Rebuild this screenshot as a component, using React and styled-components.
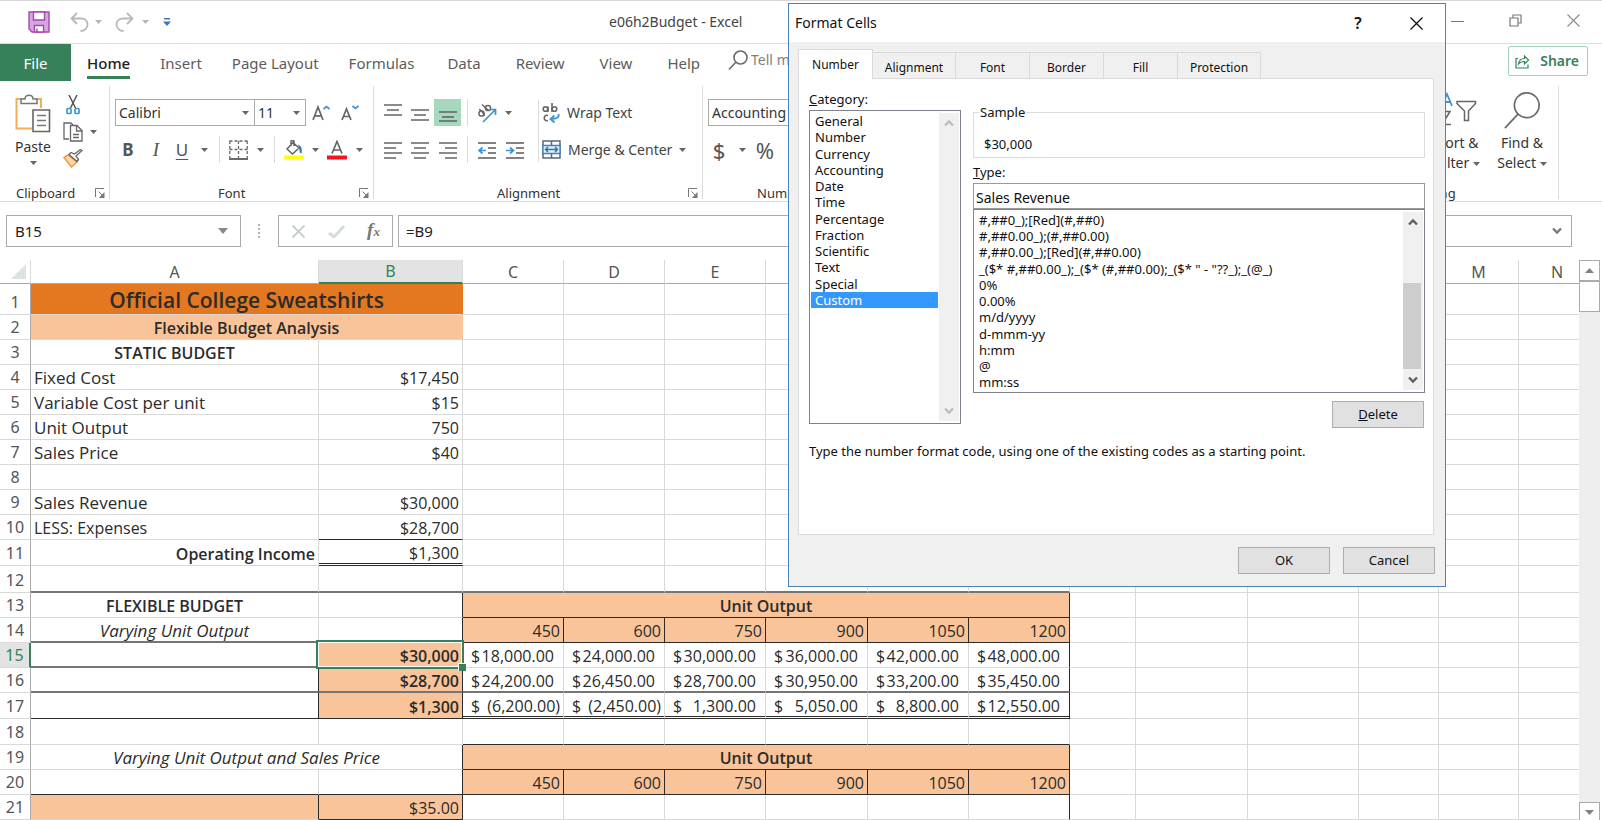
import React, { useState } from "react";
import styled, { createGlobalStyle, css } from "styled-components";

const UI = `"Noto Sans", "Open Sans", sans-serif`;
const SHEET = `"Open Sans", "Noto Sans", sans-serif`;

const green = "#36815a";
const grid = "#d9d9d9";
const ink = "#2b2b2b";
const peach = "#f9c499";

const TABS = ["Home", "Insert", "Page Layout", "Formulas"];
const MORE_TABS = ["Data", "Review", "View", "Help"];

const COLUMNS = [
  ["A", 288], ["B", 144], ["C", 101], ["D", 101], ["E", 101], ["F", 102], ["G", 101],
  ["H", 101], ["I", 66], ["J", 112], ["K", 111], ["L", 80], ["M", 80], ["N", 77]
];

const CATEGORIES = [
  "General", "Number", "Currency", "Accounting", "Date", "Time",
  "Percentage", "Fraction", "Scientific", "Text", "Special", "Custom"
];

const FORMATS = [
  "#,##0_);[Red](#,##0)",
  "#,##0.00_);(#,##0.00)",
  "#,##0.00_);[Red](#,##0.00)",
  `_($* #,##0.00_);_($* (#,##0.00);_($* " - "??_);_(@_)`,
  "0%",
  "0.00%",
  "m/d/yyyy",
  "d-mmm-yy",
  "h:mm",
  "@",
  "mm:ss"
];

const DIALOG_TABS = [
  ["Number", 75], ["Alignment", 83], ["Font", 74], ["Border", 74], ["Fill", 74], ["Protection", 83]
];

// borders: r = right, b = bottom, s = soft bottom, d = double bottom, n = no right border
const unitHeader = [
  { text: "Unit Output", span: 6, bold: true, align: "center", fill: peach, line: "rb" }
];
const units = ["450", "600", "750", "900", "1050", "1200"].map(text => ({
  text, align: "right", fill: peach, line: "rb"
}));
const money = (values, line = "") =>
  values.map((text, i) => ({ money: text, line: line + (i === 5 ? "r" : "") }));
const blanks = (count, line = "") => new Array(count).fill({ line });

const ROWS = [
  { h: 31, cells: [{ text: "Official College Sweatshirts", span: 2, bold: true, size: 21, align: "center", fill: "#e47820", line: "n" }] },
  { h: 25, cells: [{ text: "Flexible Budget Analysis", span: 2, bold: true, align: "center", fill: peach, line: "n" }] },
  { h: 25, cells: [{ text: "STATIC BUDGET", bold: true, align: "center" }] },
  { h: 25, cells: [{ text: "Fixed Cost", size: 17 }, { text: "$17,450", align: "right" }] },
  { h: 25, cells: [{ text: "Variable Cost per unit", size: 17 }, { text: "$15", align: "right" }] },
  { h: 25, cells: [{ text: "Unit Output", size: 17 }, { text: "750", align: "right" }] },
  { h: 25, cells: [{ text: "Sales Price", size: 17 }, { text: "$40", align: "right" }] },
  { h: 25, cells: [] },
  { h: 25, cells: [{ text: "Sales Revenue", size: 17 }, { text: "$30,000", align: "right" }] },
  { h: 25, cells: [{ text: "LESS: Expenses" }, { text: "$28,700", align: "right", line: "b" }] },
  { h: 26, cells: [{ text: "Operating Income", bold: true, align: "right" }, { text: "$1,300", align: "right", line: "d" }] },
  { h: 27, cells: blanks(8, "s") },
  { h: 25, cells: [{ text: "FLEXIBLE BUDGET", bold: true, align: "center" }, { line: "r" }, ...unitHeader] },
  { h: 25, cells: [{ text: "Varying Unit Output", size: 17, italic: true, align: "center", line: "s" }, { line: "rs" }, ...units] },
  {
    h: 25,
    cells: [
      { line: "s" },
      { text: "$30,000", bold: true, align: "right", fill: peach, line: "r", selected: true },
      ...money(["18,000.00", "24,000.00", "30,000.00", "36,000.00", "42,000.00", "48,000.00"])
    ]
  },
  {
    h: 25,
    cells: [
      { line: "rs" },
      { text: "$28,700", bold: true, align: "right", fill: peach, line: "rs" },
      ...money(["24,200.00", "26,450.00", "28,700.00", "30,950.00", "33,200.00", "35,450.00"], "s")
    ]
  },
  {
    h: 26,
    cells: [
      { line: "rb" },
      { text: "$1,300", bold: true, align: "right", fill: peach, line: "rb" },
      ...money(["(6,200.00)", "(2,450.00)", "1,300.00", "5,050.00", "8,800.00", "12,550.00"], "d")
    ]
  },
  { h: 26, cells: [...blanks(2), ...blanks(6, "b")] },
  { h: 25, cells: [{ text: "Varying Unit Output and Sales Price", size: 17, span: 2, italic: true, align: "center", line: "r" }, ...unitHeader] },
  { h: 25, cells: [{ line: "b" }, { line: "rb" }, ...units] },
  {
    h: 25,
    cells: [
      { fill: peach, line: "r" },
      { text: "$35.00", align: "right", fill: peach, line: "rb" },
      ...blanks(5),
      { line: "r" }
    ]
  }
];

const Caret = ({ color = "#666" }) => (
  <svg width="7" height="4" viewBox="0 0 7 4"><path d="M0 0h7L3.5 4z" fill={color} /></svg>
);

const Chevron = ({ up, color = "#606060" }) => (
  <svg width="10" height="8" viewBox="0 0 10 8">
    <path d={up ? "M1 6.5L5 2.5L9 6.5" : "M1 1.5L5 5.5L9 1.5"} fill="none" stroke={color} strokeWidth="2.4" />
  </svg>
);

const Launcher = () => (
  <svg width="10" height="10" viewBox="0 0 10 10" fill="none" stroke="#777">
    <path d="M.5 9V.5H9M3.5 3.5L8 8" />
    <path d="M9.5 4v6H4z" fill="#777" stroke="none" />
  </svg>
);

const SaveIcon = () => (
  <svg width="22" height="22" viewBox="0 0 22 22" stroke="#a24aae" strokeWidth="1.4">
    <path d="M1 1h20v20H4l-3-3z" fill="#d7a5de" />
    <path d="M5.5 1h11v8h-11zM6.5 21v-6.500h9V21z" fill="#fff" />
    <path d="M9 17.500v3.500" />
  </svg>
);

const UndoIcon = ({ flip }) => (
  <svg width="19" height="20" viewBox="0 0 19 20" fill="none" stroke="#b9b9b9" strokeWidth="1.8">
    <g transform={flip ? "translate(19 0) scale(-1 1)" : undefined}>
      <path d="M7 1L1.500 6.500L7 12M2 6.500h9c4 0 6.500 2.500 6.500 6s-3 6.500-7 6.500" />
    </g>
  </svg>
);

const SearchIcon = ({ size = 20, width = 1.6 }) => (
  <svg width={size} height={size} viewBox="0 0 20 20" fill="none" stroke="#6a6a6a" strokeWidth={width}>
    <circle cx="12.5" cy="7.5" r="6.5" />
    <path d="M8 12L1 19.500" />
  </svg>
);

const PasteIcon = () => (
  <svg width="36" height="39" viewBox="0 0 36 39" fill="none">
    <path d="M7 5H1.500v29.500H17M21 5h5v9" stroke="#f2ae5c" strokeWidth="2" />
    <path d="M6 9.500V5h4c0-5 8-5 8 0h4v4.500z" fill="#fff" stroke="#777" strokeWidth="1.5" />
    <path d="M18 16h16.500v21.500H18z" fill="#fff" stroke="#666" strokeWidth="1.6" />
    <path d="M22 21.500h9M22 26.500h9M22 31.500h9" stroke="#777" strokeWidth="1.3" />
  </svg>
);

const CutIcon = () => (
  <svg width="14" height="20" viewBox="0 0 14 20" fill="none">
    <path d="M3 0l6.500 13M11 0L4.500 13" stroke="#555" strokeWidth="1.5" />
    <rect x="1" y="13.5" width="4" height="5" rx="1" stroke="#3c94d2" strokeWidth="1.7" />
    <rect x="9" y="13.5" width="4" height="5" rx="1" stroke="#3c94d2" strokeWidth="1.7" />
  </svg>
);

const CopyIcon = () => (
  <svg width="20" height="20" viewBox="0 0 20 20" fill="none" stroke="#666" strokeWidth="1.3">
    <path d="M6 17H1V1h7l2 2" />
    <path d="M7.500 3.500H14l5 5V19H7.500z" fill="#fff" />
    <path d="M13.500 4v5H19M10 12.500h6M10 15.500h6" />
  </svg>
);

const BrushIcon = () => (
  <svg width="20" height="19" viewBox="0 0 20 19" fill="none">
    <path d="M5 6L1 8.500l7.500 9.500 5.500-5z" fill="#fbd9ae" stroke="#ef9a4b" strokeWidth="1.5" />
    <path d="M6 5.500l8 7 1.500-2-2.500-3.500L19 1.500 17.500.5l-6 4.500L8 3.500z" fill="#fff" stroke="#666" strokeWidth="1.3" />
  </svg>
);

const Lines = ({ rows, w = 18, h = 18 }) => (
  <svg width={w} height={h} viewBox={`0 0 ${w} ${h}`} stroke="#5a5a5a" strokeWidth="1.4">
    {rows.map(([x1, x2, y]) => <path key={y} d={`M${x1} ${y}H${x2}`} />)}
  </svg>
);

const FontSizeIcon = ({ down }) => (
  <svg width="18" height="16" viewBox="0 0 18 16" fill="none">
    <path d={down ? "M1 15L5.500 4L10 15M2.500 11.500h6" : "M1 15L6 2L11 15M2.800 10.800h6.500"} stroke="#666" strokeWidth="1.7" />
    <path d={down ? "M11.500 1L14.500 3.500L17.500 1" : "M11.500 4L14.500 1.500L17.500 4"} stroke="#3c94d2" strokeWidth="1.7" />
  </svg>
);

const BorderIcon = () => (
  <svg width="19" height="20" viewBox="0 0 19 20" fill="none" stroke="#6a6a6a">
    <path d="M.5 1H18.500M.5 9.500H18.500M.8 1v17M9.500 1v17M18.200 1v17" strokeDasharray="3 2" strokeWidth="1.3" />
    <path d="M0 19h19" strokeWidth="2" />
  </svg>
);

const FillIcon = () => (
  <svg width="20" height="20" viewBox="0 0 20 20" fill="none">
    <path d="M9 2.500L3 9l5.500 5L15 8zM7 6V1.500c0-1.500 3-1.500 3 0V6" stroke="#666" strokeWidth="1.5" />
    <path d="M14 4.500c3 1 4.500 4 3.500 9-2 0-2-3-2-5z" fill="#2a77ad" />
    <path d="M0 15.500h20V19.500H0z" fill="#ffff12" />
  </svg>
);

const FontColorIcon = () => (
  <svg width="20" height="20" viewBox="0 0 20 20" fill="none">
    <path d="M5 13.500L10 1.500L15 13.500M6.500 10h7" stroke="#666" strokeWidth="1.7" />
    <path d="M0 15.500h20V19.500H0z" fill="#f5141d" />
  </svg>
);

const OrientationIcon = () => (
  <svg width="22" height="20" viewBox="0 0 22 20" fill="none">
    <g stroke="#666" strokeWidth="1.5">
      <circle cx="5.5" cy="10.5" r="2.6" />
      <path d="M3 6.500c2 0 4 3 5.500 6.500" />
      <circle cx="12" cy="5" r="2.6" />
      <path d="M6 1.500l6.500 6" />
    </g>
    <path d="M7 19L19 7M13.500 6.500H19.500V12" stroke="#3c94d2" strokeWidth="1.7" />
  </svg>
);

const WrapIcon = () => (
  <svg width="18" height="20" viewBox="0 0 18 20" fill="none">
    <g stroke="#666" strokeWidth="1.6">
      <circle cx="3.5" cy="6" r="2.3" /><path d="M6 3.500V9" />
      <circle cx="12.5" cy="6" r="2.3" /><path d="M10 0V9" />
      <path d="M6 12.500c-5-1.500-5 6.500 0 5" />
    </g>
    <path d="M16.500 11c1 3.500-2 5-7 5M12.500 12.500L8.500 16l4 3.500" stroke="#3c94d2" strokeWidth="1.9" />
  </svg>
);

const MergeIcon = () => (
  <svg width="19" height="19" viewBox="0 0 19 19" fill="none">
    <path d="M1 1h17v17H1zM9.500 1v4M9.500 14v4" stroke="#5c6872" strokeWidth="1.5" />
    <path d="M1 5.500h17v8H1z" fill="#e3f0fa" stroke="#3c84bd" strokeWidth="1.3" />
    <path d="M3.500 9.500h12M6 7L3.500 9.500L6 12M13 7l2.500 2.500L13 12" stroke="#2a77ad" strokeWidth="1.5" />
  </svg>
);

const IndentIcon = ({ right }) => (
  <svg width="18" height="18" viewBox="0 0 18 18" fill="none">
    <path d="M0 2h18M10 7h8M10 12h8M0 17h18" stroke="#5a5a5a" strokeWidth="1.4" />
    <path d={right ? "M0 9.500h7M4 6.500l3.500 3L4 12.500" : "M8 9.500H1.500M4.500 6.500L1 9.500l3.500 3"} stroke="#3c94d2" strokeWidth="1.7" />
  </svg>
);

const SortFilterIcon = () => (
  <svg width="37" height="38" viewBox="0 0 37 38" fill="none">
    <path d="M2 15L7 3l5 12M4 11h6.500" stroke="#3c94d2" strokeWidth="1.8" />
    <path d="M2 20.500h8L2 33.500h9" stroke="#666" strokeWidth="1.6" />
    <path d="M17 10.500h18.500v2L28.500 20v9.500h-4V20L17 12.500z" stroke="#666" strokeWidth="1.5" />
  </svg>
);

const ShareIcon = () => (
  <svg width="15" height="15" viewBox="0 0 15 15" fill="none" stroke={green} strokeWidth="1.2">
    <path d="M3 4.500H1V14h12v-3.500M3.500 10c.5-4 3-5.500 6-5.500V2l4 4-4 4V7.500C7 7.500 5 8 3.500 10z" />
  </svg>
);

const CrossIcon = ({ size = 13, color, width = 1.3 }) => (
  <svg width={size} height={size} viewBox="0 0 13 13" stroke={color} strokeWidth={width}>
    <path d="M.5 .5l12 12M12.500 .5l-12 12" />
  </svg>
);

const Combo = ({ label, value, width }) => (
  <ComboWrap $width={width}>
    <ComboSelect aria-label={label} defaultValue={value}>
      <option>{value}</option>
    </ComboSelect>
    <ComboArrow><Caret /></ComboArrow>
  </ComboWrap>
);

const GridCell = ({ cell }) => (
  <Cell colSpan={cell.span} {...cellStyle(cell)}>
    {cell.money ? (
      <Money $negative={cell.money[0] === "("}><span>$</span><span>{cell.money}</span></Money>
    ) : cell.text}
    {cell.selected && <Selection />}
  </Cell>
);

const cellStyle = ({ align, fill, bold, italic, size, line = "" }) => ({
  $align: align, $fill: fill, $bold: bold, $italic: italic, $size: size, $line: line
});

const Worksheet = () => (
  <SheetArea>
    <TableClip>
      <Table>
        <colgroup>
          <Col $width={31} />
          {COLUMNS.map(([name, width]) => <Col key={name} $width={width} />)}
        </colgroup>
        <thead>
          <tr>
            <Corner><svg width="15" height="15" viewBox="0 0 15 15"><path d="M15 0v15H0z" fill="#dbe3e3" /></svg></Corner>
            {COLUMNS.map(([name]) => <ColHead key={name} scope="col" $active={name === "B"}>{name}</ColHead>)}
          </tr>
        </thead>
        <tbody>
          {ROWS.map(({ h, cells }, index) => {
            const used = cells.reduce((sum, cell) => sum + (cell.span || 1), 0);
            return (
              <Row key={index} $height={h}>
                <RowHead scope="row" $active={index === 14}>{index + 1}</RowHead>
                {[...cells, ...blanks(COLUMNS.length - used)].map((cell, i) => <GridCell key={i} cell={cell} />)}
              </Row>
            );
          })}
        </tbody>
      </Table>
    </TableClip>
    <SheetScroll>
      <SheetScrollButton aria-label="Scroll up">
        <svg width="9" height="5" viewBox="0 0 9 5"><path d="M0 5h9L4.500 0z" fill="#808080" /></svg>
      </SheetScrollButton>
      <SheetThumb />
      <SheetScrollButton aria-label="Scroll down" $last>
        <svg width="9" height="5" viewBox="0 0 9 5"><path d="M0 0h9L4.500 5z" fill="#808080" /></svg>
      </SheetScrollButton>
    </SheetScroll>
  </SheetArea>
);

const FormatCells = () => {
  const [category, setCategory] = useState("Custom");
  const [type, setType] = useState("Sales Revenue");

  return (
    <Dialog role="dialog" aria-label="Format Cells">
      <DialogTitle>
        <h2>Format Cells</h2>
        <DialogIcon aria-label="Help">?</DialogIcon>
        <DialogIcon aria-label="Close"><CrossIcon color="#111" /></DialogIcon>
      </DialogTitle>
      <DialogBody>
        <DialogTabs role="tablist">
          {DIALOG_TABS.map(([name, width], i) => (
            <DialogTab key={name} role="tab" $width={width} $active={i === 0}>{name}</DialogTab>
          ))}
        </DialogTabs>
        <Panel>
          <Columns>
            <CategoryColumn>
              <Label as="span"><u>C</u>ategory:</Label>
              <ListBox $height={314}>
                <Options role="listbox" aria-label="Category" $shift={3}>
                  {CATEGORIES.map(name => (
                    <Option
                      key={name}
                      role="option"
                      aria-selected={name === category}
                      $selected={name === category}
                      onClick={() => setCategory(name)}
                    >
                      {name}
                    </Option>
                  ))}
                </Options>
                <ListScroll>
                  <Chevron up color="#bdbdbd" />
                  <Chevron color="#bdbdbd" />
                </ListScroll>
              </ListBox>
            </CategoryColumn>
            <TypeColumn>
              <Sample>
                <legend>Sample</legend>
                $30,000
              </Sample>
              <Label htmlFor="type"><u>T</u>ype:</Label>
              <TypeInput id="type" value={type} onChange={e => setType(e.target.value)} />
              <ListBox $height={184}>
                <Options role="listbox" aria-label="Format codes" $shift={4}>
                  {FORMATS.map(code => (
                    <Option key={code} role="option" onClick={() => setType(code)}>{code}</Option>
                  ))}
                </Options>
                <ListScroll>
                  <Chevron up />
                  <ListThumb />
                  <Chevron />
                </ListScroll>
              </ListBox>
              <DialogButton><u>D</u>elete</DialogButton>
            </TypeColumn>
          </Columns>
          <Hint>Type the number format code, using one of the existing codes as a starting point.</Hint>
        </Panel>
        <Actions>
          <DialogButton>OK</DialogButton>
          <DialogButton>Cancel</DialogButton>
        </Actions>
      </DialogBody>
    </Dialog>
  );
};

const App = () => (
  <Page>
    <GlobalStyle />
    <TitleBar>
      <QuickAccess>
        <Tool aria-label="Save" $width={52}><SaveIcon /></Tool>
        <Tool aria-label="Undo" $width={28}><UndoIcon /></Tool>
        <Tool aria-label="Undo history" $width={10}><Caret color="#b5b5b5" /></Tool>
        <Tool aria-label="Redo" $width={42}><UndoIcon flip /></Tool>
        <Tool aria-label="Redo history" $width={0}><Caret color="#b5b5b5" /></Tool>
        <Tool aria-label="Customize toolbar" $width={44}>
          <svg width="8" height="8" viewBox="0 0 8 8"><path d="M1 0h6v1.500H1zM0 3.500h8L4 8z" fill="#3f76ad" /></svg>
        </Tool>
      </QuickAccess>
      <FileName>e06h2Budget - Excel</FileName>
      <WindowButtons>
        <button aria-label="Minimize"><svg width="13" height="13" stroke="#777"><path d="M0 7.500h13" /></svg></button>
        <button aria-label="Restore">
          <svg width="13" height="13" fill="none" stroke="#777" strokeWidth="1.2"><path d="M1 4h8v8H1zM4 4V1h8v8H9" /></svg>
        </button>
        <button aria-label="Close"><CrossIcon color="#8a8a8a" width={1.1} /></button>
      </WindowButtons>
    </TitleBar>

    <TabBar>
      <FileTab>File</FileTab>
      <TabGroup $gap={30}>{TABS.map((t, i) => <Tab key={t} $active={i === 0}>{t}</Tab>)}</TabGroup>
      <TabGroup $gap={35}>{MORE_TABS.map(t => <Tab key={t}>{t}</Tab>)}</TabGroup>
      <TellMe><SearchIcon /> Tell me</TellMe>
      <ShareButton><ShareIcon />Share</ShareButton>
    </TabBar>

    <Ribbon>
      <Group $width={110}>
        <GroupBody>
          <PasteButton>
            <PasteIcon />
            <span>Paste</span>
            <Caret />
          </PasteButton>
          <ClipTools>
            <Tool aria-label="Cut" $width={24}><CutIcon /></Tool>
            <Line>
              <Tool aria-label="Copy" $width={24}><CopyIcon /></Tool>
              <Tool aria-label="Copy options" $width={16}><Caret /></Tool>
            </Line>
            <Tool aria-label="Format painter" $width={24}><BrushIcon /></Tool>
          </ClipTools>
        </GroupBody>
        <GroupLabel $left={16}>Clipboard<Launcher /></GroupLabel>
      </Group>

      <Group $width={264}>
        <Stack>
          <Line $pad={5}>
            <Combo label="Font" value="Calibri" width={140} />
            <Combo label="Font size" value="11" width={52} />
            <Tool aria-label="Increase font size" $width={30}><FontSizeIcon /></Tool>
            <Tool aria-label="Decrease font size" $width={28}><FontSizeIcon down /></Tool>
          </Line>
          <Line $pad={4}>
            <Tool $width={28}><b>B</b></Tool>
            <Tool $width={28}><Italic>I</Italic></Tool>
            <Tool $width={24}><u>U</u></Tool>
            <Tool aria-label="Underline options" $width={20}><Caret /></Tool>
            <Divider $width={10} />
            <Tool aria-label="Borders" $width={28}><BorderIcon /></Tool>
            <Tool aria-label="Border options" $width={16}><Caret /></Tool>
            <Divider $width={12} />
            <Tool aria-label="Fill color" $width={28}><FillIcon /></Tool>
            <Tool aria-label="Fill options" $width={14}><Caret /></Tool>
            <Tool aria-label="Font color" $width={30}><FontColorIcon /></Tool>
            <Tool aria-label="Font color options" $width={14}><Caret /></Tool>
          </Line>
        </Stack>
        <GroupLabel $left={108}>Font<Launcher /></GroupLabel>
      </Group>

      <Group $width={329}>
        <GroupBody>
          <Stack>
            <Line $pad={6}>
              <Tool aria-label="Top align" $width={26}><Lines rows={[[0, 18, 1], [3, 15, 6], [0, 18, 11]]} /></Tool>
              <Tool aria-label="Middle align" $width={28}><Lines rows={[[0, 18, 6], [3, 15, 11], [0, 18, 16]]} /></Tool>
              <Tool aria-label="Bottom align" $width={27} $pressed><Lines rows={[[0, 18, 8], [3, 15, 13], [0, 18, 17]]} /></Tool>
              <Divider $width={12} />
              <Tool aria-label="Orientation" $width={28}><OrientationIcon /></Tool>
              <Tool aria-label="Orientation options" $width={14}><Caret /></Tool>
            </Line>
            <Line $pad={6}>
              <Tool aria-label="Align left" $width={26}><Lines rows={[[0, 18, 2], [0, 12, 7], [0, 18, 12], [0, 12, 17]]} /></Tool>
              <Tool aria-label="Center" $width={28}><Lines rows={[[0, 18, 2], [3, 15, 7], [0, 18, 12], [3, 15, 17]]} /></Tool>
              <Tool aria-label="Align right" $width={27}><Lines rows={[[0, 18, 2], [6, 18, 7], [0, 18, 12], [6, 18, 17]]} /></Tool>
              <Divider $width={12} />
              <Tool aria-label="Decrease indent" $width={28}><IndentIcon /></Tool>
              <Tool aria-label="Increase indent" $width={28}><IndentIcon right /></Tool>
            </Line>
          </Stack>
          <Divider $width={8} $tall />
          <Stack>
            <TextTool><WrapIcon />Wrap Text</TextTool>
            <TextTool><MergeIcon />Merge &amp; Center<Caret /></TextTool>
          </Stack>
        </GroupBody>
        <GroupLabel $left={123}>Alignment<Launcher /></GroupLabel>
      </Group>

      <Group $width={150}>
        <Stack>
          <Line $pad={5}><Combo label="Number format" value="Accounting" width={140} /></Line>
          <Line $pad={4}>
            <Tool $width={24} $sign>$</Tool>
            <Tool aria-label="Currency options" $width={22}><Caret /></Tool>
            <Tool $width={24} $sign>%</Tool>
          </Line>
        </Stack>
        <GroupLabel $left={54}>Number</GroupLabel>
      </Group>

      <Group $width={160} $end>
        <BigTools>
          <BigTool><SortFilterIcon /><span>Sort &amp;<br />Filter <Caret /></span></BigTool>
          <BigTool><SearchIcon size={38} width={0.9} /><span>Find &amp;<br />Select <Caret /></span></BigTool>
        </BigTools>
        <GroupLabel $left={14}>Editing</GroupLabel>
      </Group>
    </Ribbon>

    <FormulaBar>
      <NameBox>
        <input aria-label="Name box" defaultValue="B15" />
        <svg width="10" height="6" viewBox="0 0 10 6"><path d="M0 0h10L5 6z" fill="#888" /></svg>
      </NameBox>
      <Dots><i /><i /><i /><i /></Dots>
      <FormulaTools>
        <Tool aria-label="Cancel" $width={38}><CrossIcon color="#c3cbcb" width={1.8} /></Tool>
        <Tool aria-label="Enter" $width={38}>
          <svg width="17" height="13" viewBox="0 0 17 13" fill="none"><path d="M1 8l5 4L16 1" stroke="#d3dddd" strokeWidth="3" /></svg>
        </Tool>
        <Tool aria-label="Insert function" $width={37}><Fx>f<sub>x</sub></Fx></Tool>
      </FormulaTools>
      <FormulaInput>
        <input aria-label="Formula" defaultValue="=B9" />
        <Chevron color="#777" />
      </FormulaInput>
    </FormulaBar>

    <Worksheet />
    <FormatCells />
  </Page>
);

const GlobalStyle = createGlobalStyle`
  * { box-sizing: border-box; }
  body { margin: 0; background: #fff; }
  button, input, select { font: inherit; color: inherit; }
  button { padding: 0; border: 0; background: none; }
  svg { flex: none; display: block; }
`;

const Page = styled.div`
  position: relative;
  display: flex;
  flex-direction: column;
  height: 100vh;
  overflow: hidden;
  background: #fff;
  color: #333;
  font: 14px/20px ${UI};
`;

const TitleBar = styled.header`
  display: grid;
  grid-template-columns: 609px 1fr auto;
  align-items: center;
  height: 44px;
  border-top: 1px solid #d8d8d8;
  border-bottom: 1px solid #dcdcdc;
`;

const QuickAccess = styled.div`
  display: flex;
  align-items: center;
  padding-left: 13px;
`;

const FileName = styled.h1`
  margin: 0;
  color: #444;
  font-size: 14px;
  font-weight: 400;
`;

const WindowButtons = styled.div`
  display: flex;
  gap: 45px;
  padding: 0 22px 4px 0;
`;

const Tool = styled.button`
  display: flex;
  align-items: center;
  justify-content: center;
  width: ${({ $width }) => $width}px;
  height: 27px;
  background: ${({ $pressed }) => ($pressed ? "#a6d8bd" : "none")};
  color: #555;
  font-size: ${({ $sign }) => ($sign ? "22px" : "17px")};

  u { text-underline-offset: 3px; }
`;

const Italic = styled.i`
  font-family: "Liberation Serif", serif;
  font-size: 19px;
`;

const TabBar = styled.nav`
  display: flex;
  height: 37px;
  font-size: 15px;
`;

const FileTab = styled.button`
  width: 71px;
  background: ${green};
  color: #fff;
`;

const TabGroup = styled.div`
  display: flex;
  gap: ${({ $gap }) => $gap}px;
  padding-left: ${({ $gap }) => ($gap === 30 ? 16 : 33)}px;
`;

const Tab = styled.button`
  position: relative;
  color: ${({ $active }) => ($active ? "#222" : "#5c5c5c")};
  font-weight: ${({ $active }) => ($active ? 500 : 400)};

  ${({ $active }) => $active && css`
    &::after {
      content: "";
      position: absolute;
      right: 0;
      bottom: 2px;
      left: 0;
      height: 3px;
      background: ${green};
    }
  `}
`;

const TellMe = styled.button`
  display: flex;
  align-items: center;
  gap: 3px;
  margin-left: 28px;
  padding-bottom: 5px;
  color: #808080;
  font-size: 14px;
`;

const ShareButton = styled.button`
  display: flex;
  align-items: center;
  gap: 10px;
  height: 30px;
  margin: 2px 14px 0 auto;
  padding: 0 8px 0 6px;
  border: 1px solid #a3d2ba;
  border-radius: 2px;
  color: ${green};
  font-size: 14px;
  font-weight: 600;
`;

const Ribbon = styled.section`
  display: flex;
  height: 121px;
  padding-top: 5px;
  border-bottom: 1px solid #dcdcdc;
`;

const Group = styled.div`
  display: flex;
  flex-direction: column;
  width: ${({ $width }) => $width}px;
  height: 113px;
  margin-left: ${({ $end }) => ($end ? "auto" : 0)};
  margin-right: ${({ $end }) => ($end ? "43px" : 0)};
  border-right: 1px solid #dcdcdc;
`;

const GroupBody = styled.div`
  display: flex;
  flex: 1;
`;

const GroupLabel = styled.div`
  display: flex;
  align-items: center;
  justify-content: space-between;
  height: 16px;
  margin-bottom: -2px;
  padding: 0 4px 0 ${({ $left }) => $left}px;
  font-size: 13px;
`;

const Stack = styled.div`
  display: flex;
  flex: 1;
  flex-direction: column;
  gap: 10px;
  padding-top: 13px;
`;

const Line = styled.div`
  display: flex;
  padding-left: ${({ $pad }) => $pad || 0}px;
`;

const Divider = styled.span`
  width: ${({ $width }) => $width}px;
  height: ${({ $tall }) => ($tall ? 62 : 27)}px;
  margin-top: ${({ $tall }) => ($tall ? 14 : 0)}px;
  background: linear-gradient(#dcdcdc, #dcdcdc) center / 1px 100% no-repeat;
`;

const PasteButton = styled.button`
  display: flex;
  flex-direction: column;
  align-items: center;
  gap: 4px;
  width: 36px;
  height: 86px;
  margin-left: 15px;
  padding-top: 8px;
`;

const ClipTools = styled.div`
  display: flex;
  flex-direction: column;
  padding: 5px 0 0 10px;
`;

const TextTool = styled.button`
  display: flex;
  align-items: center;
  gap: 7px;
  height: 27px;
  color: #444;
  white-space: nowrap;
`;

const BigTools = styled.div`
  display: flex;
  flex: 1;
  justify-content: flex-end;
  padding-right: 4px;
`;

const BigTool = styled.button`
  display: flex;
  flex-direction: column;
  align-items: center;
  gap: 4px;
  width: 64px;
  height: 89px;
  padding-top: 5px;

  span { white-space: nowrap; }
  span svg { display: inline-block; vertical-align: middle; }
`;

const ComboWrap = styled.div`
  position: relative;
  width: ${({ $width }) => $width}px;
  & + & { margin-left: -1px; }
`;

const ComboSelect = styled.select`
  appearance: none;
  width: 100%;
  height: 27px;
  padding: 0 3px;
  border: 1px solid #ababab;
  border-radius: 0;
  background: #fff;
`;

const ComboArrow = styled.span`
  position: absolute;
  top: 12px;
  right: 6px;
  pointer-events: none;
`;

const FormulaBar = styled.div`
  display: flex;
  align-items: center;
  height: 58px;
  padding: 0 30px 0 6px;
  color: #222;
`;

const field = css`
  display: flex;
  align-items: center;
  height: 32px;
  border: 1px solid #ababab;

  input {
    flex: 1;
    min-width: 0;
    border: 0;
    outline: 0;
    background: none;
    font-size: 15px;
  }
`;

const NameBox = styled.div`
  ${field}
  width: 235px;
  padding: 0 12px 0 6px;
`;

const FormulaInput = styled.div`
  ${field}
  flex: 1;
  margin-left: 5px;
  padding: 0 9px 0 5px;
`;

const Dots = styled.span`
  display: grid;
  gap: 2px;
  margin: 0 18px 0 17px;

  i { width: 2px; height: 2px; background: #b5b5b5; }
`;

const FormulaTools = styled.div`
  ${field}
`;

const Fx = styled.i`
  color: #777;
  font: italic bold 19px/20px "Liberation Serif", serif;

  sub { font-size: 13px; vertical-align: baseline; }
`;

const SheetArea = styled.main`
  display: flex;
  flex: 1;
  min-height: 0;
`;

const TableClip = styled.div`
  flex: 1;
  min-width: 0;
  overflow: hidden;
`;

const Table = styled.table`
  table-layout: fixed;
  width: 100%;
  border-collapse: separate;
  border-spacing: 0;
  color: ${ink};
  font: 16px/20px ${SHEET};
`;

const Col = styled.col`
  width: ${({ $width }) => $width}px;
`;

const Corner = styled.td`
  height: 24px;
  padding: 0 4px 0 11px;
  border-right: 1px solid ${grid};
  border-bottom: 1px solid #ababab;
`;

const ColHead = styled.th`
  height: 24px;
  padding: 0;
  border-right: 1px solid ${grid};
  border-bottom: ${({ $active }) => ($active ? `2px solid ${green}` : "1px solid #ababab")};
  background: ${({ $active }) => ($active ? "#e3e3e3" : "#fff")};
  color: ${({ $active }) => ($active ? green : "#555")};
  font: 16px/20px ${UI};
`;

const RowHead = styled.th`
  padding: 0;
  border-right: ${({ $active }) => ($active ? `2px solid ${green}` : "1px solid #ababab")};
  border-bottom: 1px solid ${grid};
  background: ${({ $active }) => ($active ? "#e3e3e3" : "#fff")};
  color: ${({ $active }) => ($active ? green : "#555")};
  font: 16px/24px ${UI};
  vertical-align: bottom;
`;

const Row = styled.tr`
  height: ${({ $height }) => $height}px;
`;

const bottomLine = line =>
  line.includes("d") ? `3px double ${ink}`
    : line.includes("s") ? "2px solid #757575"
    : line.includes("b") ? `1px solid ${ink}`
    : `1px solid ${grid}`;

const Cell = styled.td`
  position: relative;
  height: inherit;
  padding: 2px 3px 0;
  border-right: 1px solid ${({ $line }) => ($line.includes("r") ? ink : $line.includes("n") ? "transparent" : grid)};
  border-bottom: ${({ $line }) => bottomLine($line)};
  background: ${({ $fill }) => $fill || "none"};
  font-size: ${({ $size }) => $size || 16}px;
  font-weight: ${({ $bold }) => ($bold ? 600 : 400)};
  font-style: ${({ $italic }) => ($italic ? "italic" : "normal")};
  text-align: ${({ $align }) => $align || "left"};
  white-space: nowrap;
`;

const Money = styled.div`
  display: flex;
  justify-content: space-between;
  padding: 0 ${({ $negative }) => ($negative ? 0 : 6)}px 0 5px;
`;

const Selection = styled.span`
  position: absolute;
  inset: -3px -2px -2px -3px;
  border: 2px solid ${green};
  box-shadow: inset 0 0 0 1px #fff;
  pointer-events: none;
  z-index: 1;

  &::after {
    content: "";
    position: absolute;
    right: -4px;
    bottom: -4px;
    width: 7px;
    height: 7px;
    border: solid #fff;
    border-width: 1px 0 0 1px;
    background: ${green};
  }
`;

const SheetScroll = styled.div`
  display: flex;
  flex-direction: column;
  width: 21px;
  margin-right: 2px;
  background: #eee;
`;

const SheetScrollButton = styled.button`
  display: flex;
  align-items: ${({ $last }) => ($last ? "flex-start" : "center")};
  justify-content: center;
  height: ${({ $last }) => ($last ? 18 : 21)}px;
  margin-top: ${({ $last }) => ($last ? "auto" : 0)};
  padding-top: ${({ $last }) => ($last ? 7 : 0)}px;
  border: 1px solid #ababab;
  border-bottom-width: ${({ $last }) => ($last ? 0 : 1)}px;
  background: #fff;
`;

const SheetThumb = styled.span`
  height: 31px;
  border: 1px solid #ababab;
  background: #fff;
`;

const Dialog = styled.div`
  position: absolute;
  top: 3px;
  left: 788px;
  z-index: 2;
  width: 658px;
  border: 1px solid #4a84bd;
  background: #f0f0f0;
  color: #111;
  font-size: 13px;
  line-height: 16px;
`;

const DialogTitle = styled.div`
  display: flex;
  align-items: center;
  height: 38px;
  padding-left: 6px;
  background: #fff;

  h2 {
    flex: 1;
    margin: 0;
    font-size: 14px;
    font-weight: 400;
  }
`;

const DialogIcon = styled.button`
  display: flex;
  align-items: center;
  justify-content: center;
  width: 58px;
  height: 38px;
  font-size: 16px;
  font-weight: 600;
`;

const DialogBody = styled.div`
  padding: 7px 11px 12px 9px;
`;

const DialogTabs = styled.div`
  display: flex;
  align-items: flex-end;
`;

const DialogTab = styled.button`
  width: ${({ $width }) => $width}px;
  height: ${({ $active }) => ($active ? 30 : 26)}px;
  margin-bottom: ${({ $active }) => ($active ? -1 : 0)}px;
  padding-top: ${({ $active }) => ($active ? 0 : 4)}px;
  border: 1px solid #dadada;
  border-left-width: ${({ $active }) => ($active ? 1 : 0)}px;
  border-bottom: 0;
  background: ${({ $active }) => ($active ? "#fff" : "none")};
  font-size: 12px;
  z-index: 1;
`;

const Panel = styled.div`
  height: 457px;
  padding: 12px 8px 0 10px;
  border: 1px solid #dadada;
  background: #fff;
`;

const Columns = styled.div`
  display: flex;
  gap: 12px;
`;

const CategoryColumn = styled.div`
  width: 152px;
`;

const TypeColumn = styled.div`
  display: flex;
  flex: 1;
  flex-direction: column;
  min-width: 0;
  padding-top: 13px;

  > button { align-self: flex-end; margin: 8px 1px 0 0; }
`;

const Label = styled.label`
  display: block;
  height: 19px;
`;

const Sample = styled.fieldset`
  height: 54px;
  margin: 0 0 6px;
  padding: 16px 10px 0;
  border: 1px solid #dcdcdc;

  legend { margin-left: -5px; padding: 0 1px; }
`;

const TypeInput = styled.input`
  height: 26px;
  padding: 2px 2px 0;
  border: 1px solid #999;
  font-size: 14px;
`;

const ListBox = styled.div`
  display: flex;
  height: ${({ $height }) => $height}px;
  padding: 2px 1px 2px 1px;
  border: 1px solid #7f828c;
  background: #fff;
`;

const Options = styled.ul`
  flex: 1;
  min-width: 0;
  margin: 0 1px 0 0;
  padding: 0;
  list-style: none;

  li:nth-child(4n + ${({ $shift }) => $shift}) { margin-top: 1px; }
`;

const Option = styled.li`
  height: 16px;
  padding: 0 4px;
  background: ${({ $selected }) => ($selected ? "#3399ff" : "none")};
  color: ${({ $selected }) => ($selected ? "#fff" : "inherit")};
  white-space: pre;
`;

const ListScroll = styled.div`
  display: flex;
  flex-direction: column;
  align-items: center;
  justify-content: space-between;
  width: 20px;
  padding: 6px 0;
  background: #f0f0f0;
`;

const ListThumb = styled.span`
  width: 18px;
  height: 86px;
  margin: auto 2px 7px 0;
  background: #cdcdcd;
`;

const DialogButton = styled.button`
  width: 92px;
  height: 27px;
  padding-bottom: 2px;
  border: 1px solid #adadad;
  background: #e1e1e1;
`;

const Hint = styled.p`
  margin: 15px 0 0;
`;

const Actions = styled.div`
  display: flex;
  justify-content: flex-end;
  gap: 13px;
  margin: 12px -1px 0 0;
`;

export default App;
